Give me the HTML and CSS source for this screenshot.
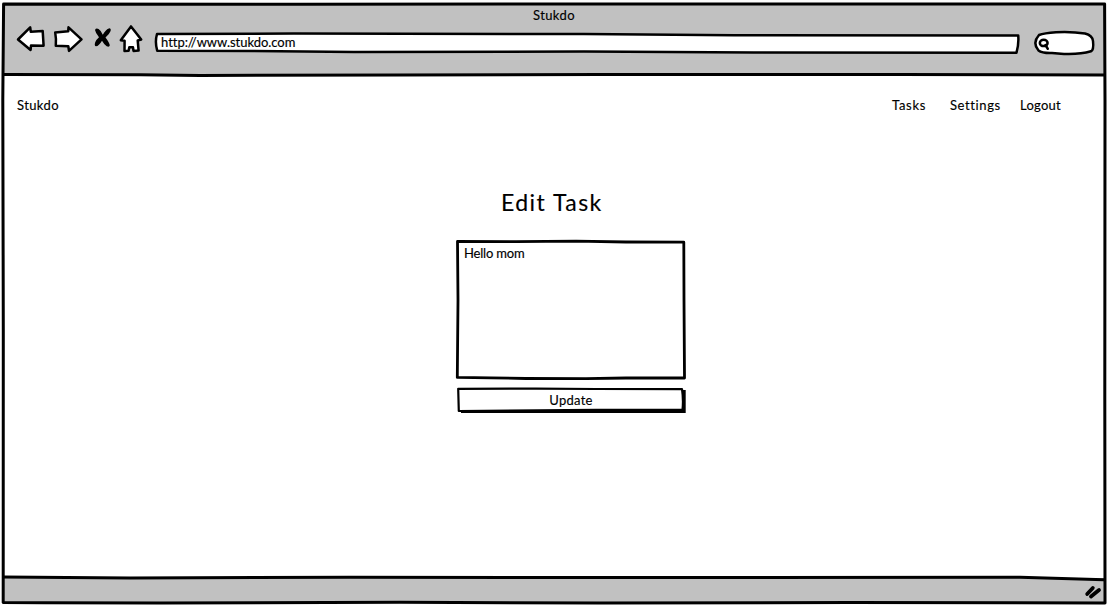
FILE: index.html
```html
<!DOCTYPE html>
<html lang="en">
<head>
<meta charset="utf-8">
<title>Stukdo</title>
<link rel="stylesheet" href="styles.css">
</head>
<body>
<div class="window">
  <header class="chrome">
    <div class="window-title">Stukdo</div>
    <div class="toolbar">
      <svg class="nav-icons" width="132" height="30" viewBox="14 24 132 30" aria-hidden="true">
        <g class="outline">
          <path d="M18 39.5 L30.2 27.3 L30.8 31.8 L42.7 31.1 L43.6 45.7 L31 45.5 L30.6 50 Z"/>
          <path d="M55.2 32.4 L68.2 31.3 L68.5 27.3 L81.5 39.3 L69 50.8 L68.3 46.3 L55.8 45.8 Q56.4 39 55.2 32.4 Z"/>
          <path d="M131 26.4 L141.2 39.6 L137.7 40.5 L138.6 50.6 L133.5 50.9 L133 47.3 L129.3 47.3 L128.6 50.8 L124.5 50.9 L124.6 40.7 L120.8 40.2 Z"/>
        </g>
        <path class="ink" d="M95 30 Q96 27.8 98.6 29 Q101 30.5 102.8 34.7 Q105.6 29.5 108.8 28.4 Q111.3 28.1 110.6 31 Q109.3 34.4 105.5 37.5 Q109.3 42.5 109.8 45.3 Q109.4 47.5 106.7 46.3 Q103.8 44 102 40.7 Q98.8 46 96 46.3 Q94 46 95.2 42.3 Q96.6 39.3 99 37.3 Q95.5 33 95 30 Z"/>
      </svg>
      <div class="address">
        <svg class="sketch" viewBox="0 0 866 22" aria-hidden="true"><path class="outline" d="M3 2 L140 1.6 L430 2 L580 3.3 L864.2 3.4 Q865 12 862.5 20.7 L600 20.5 L430 19.6 L200 20 L100 19 L3.2 18.7 Q.7 10 3 2 Z"/></svg>
        <span class="url">http://www.stukdo.com</span>
      </div>
      <svg class="search" width="62" height="26" viewBox="1033 30 62 26" aria-hidden="true">
        <g class="outline">
          <path d="M1039 35 Q1044 33 1056 32.2 Q1072 31.4 1085 33.5 Q1092.5 35.5 1093 41 Q1094 50 1091 51.3 Q1080 54.5 1064 53.9 L1052 53 Q1042 53.3 1038.5 50.5 Q1032 43 1039 35 Z"/>
          <ellipse cx="1043.7" cy="42.9" rx="3.9" ry="3.2"/>
          <path d="M1045.5 45 L1047.8 48.8"/>
        </g>
      </svg>
    </div>
  </header>
  <main class="page">
    <nav class="nav">
      <span class="brand">Stukdo</span>
      <span class="tasks">Tasks</span>
      <span class="settings">Settings</span>
      <span class="logout">Logout</span>
    </nav>
    <section class="editor">
      <h1>Edit Task</h1>
      <div class="note">
        <svg class="sketch" viewBox="0 0 230 140" aria-hidden="true"><path class="outline note-line" d="M1.5 1.5 L60 1.7 L120 1.2 L170 2 L227.8 2.2 L228 60 L228.5 138 L170 138 L130 138.7 L70 138.5 L35 137.8 L1.3 137.4 L2 60 Z"/></svg>
        <span>Hello mom</span>
      </div>
      <div class="button">
        <svg class="sketch" viewBox="0 0 230 26" aria-hidden="true"><path class="ink" d="M5 22 H226 V3 H229.7 V26 H5 Z"/><path class="outline button-line" d="M2.2 1.8 L80 1.6 L140 2 L226 2.2 Q227.6 13 226.5 22.8 L140 22.9 L2.8 24 Z"/></svg>
        <span>Update</span>
      </div>
    </section>
  </main>
  <footer class="status"></footer>
  <svg class="frame" viewBox="0 0 1107 605" aria-hidden="true">
    <path class="edge" d="M3.6 4 L300 4.2 L700 3.9 L1104.6 4 L1105 100 L1104.8 400 L1105 603 L850 602.5 L600 603 L400 602.3 L160 603 L45 602.7 L3.2 602.4 L3.3 330 L2.8 100 Z"/>
    <path class="edge" d="M3.5 74.4 L140 74.8 L200 75.4 L400 75 L600 74.5 L900 74.5 L1104 75"/>
    <path class="edge" d="M3.5 577 L130 578 L350 577.2 L700 577.6 L1020 577.3 L1104 579.8"/>
    <path class="grip" d="M1087.2 594 L1092.8 588 M1091 596.5 L1099 590"/>
  </svg>
</div>
</body>
</html>
```
FILE: styles.css
```css
* { box-sizing: border-box; }
body {
  margin: 0;
  background: #fcfcfc;
  color: #000;
  font: 13px/16px Lato, "Open Sans", sans-serif;
  letter-spacing: .4px;
  white-space: nowrap;
  -webkit-text-stroke: .15px #000;
}
svg { display: block; overflow: visible; }
.window {
  position: relative;
  display: flex;
  flex-direction: column;
  width: 1107px;
  height: 605px;
  padding: 4px 2px 2px 3px;
  overflow: hidden;
}
.frame { position: absolute; inset: 0; width: 1107px; height: 605px; pointer-events: none; }
.outline { fill: #fff; stroke: #000; stroke-width: 2.5; stroke-linejoin: round; stroke-linecap: round; }
.note-line { stroke-width: 2.8; }
.button-line { stroke-width: 2.2; }
.ink { fill: #000; }
.edge { fill: none; stroke: #000; stroke-width: 3; stroke-linejoin: round; }
.grip { fill: none; stroke: #000; stroke-width: 3.8; stroke-linecap: round; }
.sketch { position: absolute; inset: 0; width: 100%; height: 100%; }
.chrome { height: 71px; background: #c1c1c1; padding-top: 3px; }
.window-title { height: 17px; text-align: center; }
.toolbar { display: flex; align-items: flex-start; padding-left: 11px; }
.address { position: relative; width: 866px; height: 22px; margin: 8px 0 0 8px; padding: 2px 0 0 7px; }
.url, .note span, .button span { position: relative; }
.url { letter-spacing: -.03px; }
.search { margin: 6px 0 0 13px; }
.page { flex: 1; background: #fff; }
.nav { display: flex; padding: 22px 0 0 14px; }
.tasks { margin-left: auto; width: 58px; letter-spacing: .7px; }
.settings { width: 70px; letter-spacing: .6px; }
.logout { width: 85px; letter-spacing: .25px; }
.editor { width: 230px; margin: 73px 0 0 453px; }
h1 { margin: 0 0 22px 45px; font-size: 23px; line-height: 32px; font-weight: 400; letter-spacing: 1.45px; }
.note { position: relative; height: 140px; padding: 5px 8px; letter-spacing: -.2px; }
.button { position: relative; height: 26px; margin-top: 7px; padding-top: 5px; text-align: center; letter-spacing: .25px; }
.status { height: 25px; background: #c1c1c1; }
```
